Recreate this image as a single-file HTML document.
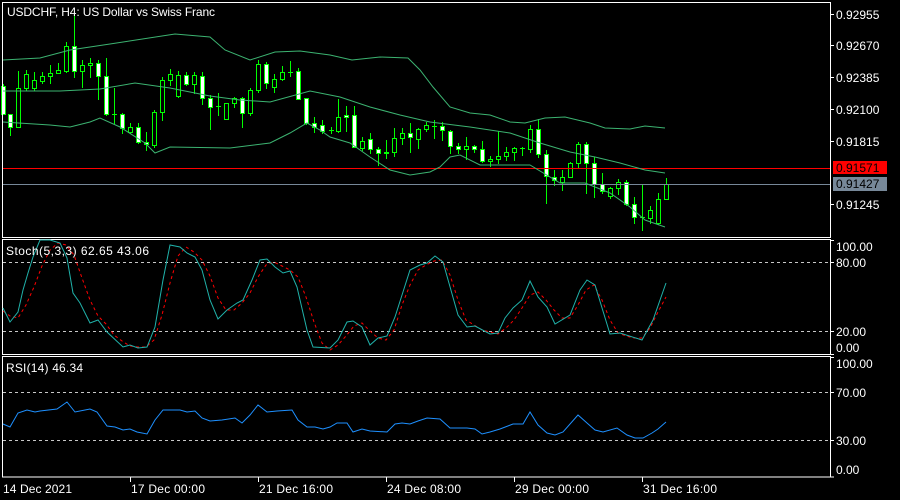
<!DOCTYPE html>
<html><head><meta charset="utf-8"><style>
html,body{margin:0;padding:0;background:#000;}
svg{display:block;}
text{font-family:"Liberation Sans",sans-serif;font-size:12px;fill:#fff;}
</style></head><body>
<svg id="s" width="900" height="500" viewBox="0 0 900 500" shape-rendering="crispEdges">
<rect width="900" height="500" fill="#000"/>
<g id="c"></g>
<!-- borders -->
<g fill="none" stroke="#fff" stroke-width="1">
<rect x="2.5" y="2.5" width="828" height="235"/>
<rect x="2.5" y="239.5" width="828" height="115"/>
<rect x="2.5" y="356.5" width="828" height="120.5"/>
</g>
<!-- levels -->
<g stroke="#c8c8c8" stroke-dasharray="3,3" stroke-width="1">
<line x1="3" y1="262.5" x2="830" y2="262.5"/>
<line x1="3" y1="331.5" x2="830" y2="331.5"/>
<line x1="3" y1="392.5" x2="830" y2="392.5"/>
<line x1="3" y1="440.5" x2="830" y2="440.5"/>
</g>
<line x1="3" y1="168.5" x2="830" y2="168.5" stroke="#ff0000"/>
<line x1="3" y1="184.5" x2="830" y2="184.5" stroke="#778899"/>
<!-- axis ticks -->
<g stroke="#fff">
<line x1="830" y1="14.5" x2="834" y2="14.5"/>
<line x1="830" y1="45.5" x2="834" y2="45.5"/>
<line x1="830" y1="77.5" x2="834" y2="77.5"/>
<line x1="830" y1="109.5" x2="834" y2="109.5"/>
<line x1="830" y1="141.5" x2="834" y2="141.5"/>
<line x1="830" y1="204.5" x2="834" y2="204.5"/>
<line x1="830" y1="240.5" x2="834" y2="240.5"/>
<line x1="830" y1="262.5" x2="834" y2="262.5"/>
<line x1="830" y1="331.5" x2="834" y2="331.5"/>
<line x1="830" y1="354.5" x2="834" y2="354.5"/>
<line x1="830" y1="357.5" x2="834" y2="357.5"/>
<line x1="830" y1="392.5" x2="834" y2="392.5"/>
<line x1="830" y1="440.5" x2="834" y2="440.5"/>
<line x1="830" y1="477" x2="834" y2="477"/>
<line x1="130.5" y1="477" x2="130.5" y2="482"/>
<line x1="258.5" y1="477" x2="258.5" y2="482"/>
<line x1="386.5" y1="477" x2="386.5" y2="482"/>
<line x1="514.5" y1="477" x2="514.5" y2="482"/>
<line x1="642.5" y1="477" x2="642.5" y2="482"/>
</g>
<g>
<text x="836" y="19">0.92955</text>
<text x="836" y="50">0.92670</text>
<text x="836" y="82">0.92385</text>
<text x="836" y="114">0.92100</text>
<text x="836" y="146">0.91815</text>
<text x="836" y="209">0.91245</text>
<rect x="833" y="161" width="54" height="13" fill="#ff0000"/>
<text x="836" y="172" style="fill:#000">0.91571</text>
<rect x="833" y="177" width="54" height="14" fill="#778899"/>
<text x="836" y="188" style="fill:#000">0.91427</text>
<text x="836" y="251">100.00</text>
<text x="836" y="267">80.00</text>
<text x="836" y="336">20.00</text>
<text x="836" y="352">0.00</text>
<text x="836" y="368">100.00</text>
<text x="836" y="397">70.00</text>
<text x="836" y="445">30.00</text>
<text x="836" y="474">0.00</text>
<text x="3" y="493" textLength="69">14 Dec 2021</text>
<text x="131" y="493" textLength="74">17 Dec 00:00</text>
<text x="259" y="493" textLength="74">21 Dec 16:00</text>
<text x="387" y="493" textLength="74">24 Dec 08:00</text>
<text x="515" y="493" textLength="74">29 Dec 00:00</text>
<text x="643" y="493" textLength="74">31 Dec 16:00</text>
</g>
<g id="ind"></g>
<text x="7" y="16" textLength="208">USDCHF, H4:  US Dollar vs Swiss Franc</text>
<text x="6" y="255" textLength="143">Stoch(5,3,3) 62.65 43.06</text>
<text x="6" y="372" textLength="77">RSI(14) 46.34</text>
</svg>
<script>
var NS="http://www.w3.org/2000/svg";
function el(p,t,a){var e=document.createElementNS(NS,t);for(var k in a)e.setAttribute(k,a[k]);p.appendChild(e);return e;}
var C=[
[3,'f',86,114,84,114],[10,'f',114,127,114,135],[18,'h',88,127,71,127],[26,'h',74,88,70,90],[34,'h',80,88,72,90],
[42,'h',76,81,72,83],[50,'h',73,76,65,83],[58,'h',70,73,63,73],[66,'h',46,71,42,72],[74,'f',46,71,15,77],
[82,'h',65,71,60,87],[90,'h',63,65,58,77],[98,'f',63,76,60,99],[106,'f',76,114,58,115],[114,'d',114,114,88,123],
[122,'f',114,128,113,133],[130,'h',127,132,123,133],[138,'f',127,142,123,143],[146,'f',142,144,132,150],[154,'h',112,145,110,147],
[162,'h',80,112,77,120],[170,'h',74,80,69,85],[178,'h',75,96,71,97],[186,'f',75,84,72,85],[194,'h',75,84,72,93],
[202,'f',76,98,72,104],[210,'f',98,107,95,129],[218,'d',106,106,93,115],[226,'h',103,119,103,119],[234,'h',98,103,97,107],
[242,'f',98,113,97,127],[250,'h',90,113,88,115],[258,'h',64,90,60,92],[266,'f',64,83,62,88],[274,'h',79,87,74,92],
[282,'h',72,79,66,80],[290,'d',72,72,61,76],[298,'f',71,99,68,99],[306,'f',98,123,98,124],[314,'f',123,127,117,132],
[322,'f',125,131,120,133],[331,'d',130,130,127,133],[338,'h',117,131,99,132],[346,'f',115,117,106,131],[354,'f',115,147,106,147],
[362,'h',141,148,137,150],[370,'f',139,149,133,153],[378,'f',149,153,147,165],[386,'h',152,153,140,158],[394,'h',138,152,128,156],
[402,'h',133,138,128,144],[410,'f',133,137,123,152],[418,'h',129,139,128,148],[426,'h',125,129,122,131],[434,'d',126,126,120,138],
[442,'f',126,130,122,140],[450,'f',131,146,130,153],[458,'f',146,149,143,153],[466,'h',146,149,137,159],[474,'f',146,149,145,152],
[482,'f',149,161,141,162],[490,'h',159,161,156,166],[498,'h',156,159,131,163],[506,'h',152,156,147,160],[514,'h',148,152,147,160],
[522,'d',148,148,147,155],[530,'h',129,149,125,152],[538,'f',129,154,119,157],[546,'f',154,176,150,203],[554,'f',177,180,170,185],
[562,'h',177,182,170,190],[570,'h',163,177,162,177],[578,'h',144,163,142,167],[586,'f',144,163,142,193],[594,'f',163,184,157,197],
[602,'f',184,191,173,193],[610,'h',188,196,187,198],[618,'h',182,188,179,194],[626,'f',182,204,180,205],[634,'f',204,217,197,223],
[642,'d',217,217,185,230],[650,'h',210,218,206,223],[658,'h',199,223,193,224],[666,'h',184,199,178,199]
];
var g=document.getElementById('c'),ind=document.getElementById('ind');
function pl(pts,col,dash){var a={points:pts.map(function(p){return p[0]+','+p[1];}).join(' '),fill:'none',stroke:col,'stroke-width':1,'shape-rendering':'auto'};if(dash)a['stroke-dasharray']=dash;el(ind,'polyline',a);}
// bollinger
pl([[3,60],[40,58],[70,50],[110,44],[175,34],[210,37],[225,50],[250,60],[275,52],[300,51],[330,55],[352,60],[380,57],[408,58],[420,70],[433,87],[450,107],[470,113],[490,115],[510,122],[525,123],[545,118],[565,117],[590,123],[605,128],[630,129],[645,126],[665,128]],'#3cb371');
pl([[3,91],[60,91],[100,89],[135,83],[170,88],[210,96],[240,100],[270,102],[310,91],[340,97],[370,107],[400,115],[430,122],[470,127],[510,133],[540,143],[570,152],[595,157],[620,163],[645,170],[665,173]],'#3cb371');
pl([[3,122],[50,125],[70,127],[90,122],[100,118],[120,127],[145,143],[155,153],[170,147],[230,148],[270,143],[290,133],[307,123],[320,130],[330,137],[350,143],[370,157],[390,170],[410,175],[430,172],[440,167],[450,157],[460,155],[480,165],[530,165],[560,183],[585,183],[610,193],[630,207],[645,220],[665,227]],'#3cb371');
C.forEach(function(c){var x=c[0],t=c[1],bt=c[2],bb=c[3],hi=c[4],lo=c[5];
el(g,'rect',{x:x,y:hi,width:1,height:Math.max(1,lo-hi+1),fill:'#00ff00'});
if(t=='d'){el(g,'rect',{x:x-2,y:bt,width:5,height:1,fill:'#00ff00'});return;}
el(g,'rect',{x:x-2,y:bt,width:5,height:bb-bt+1,fill:'#00ff00'});
if(bb-bt>=2)el(g,'rect',{x:x-1,y:bt+1,width:3,height:bb-bt-1,fill:t=='f'?'#ffffff':'#000000'});
});
var st=[[3,308],[10,322],[18,312],[23,290],[28,273],[33,257],[40,240],[50,240],[60,243],[67,258],[73,293],[80,303],[90,323],[98,320],[107,332],[123,347],[130,345],[138,348],[147,347],[155,327],[163,280],[170,245],[180,247],[187,253],[195,257],[202,270],[210,300],[218,319],[227,310],[237,303],[243,300],[252,280],[260,260],[267,259],[275,267],[283,273],[290,271],[297,287],[307,330],[313,347],[330,348],[338,340],[347,322],[353,321],[362,327],[370,345],[378,338],[387,336],[395,317],[410,270],[420,265],[427,263],[435,256],[443,262],[458,315],[467,327],[475,326],[490,334],[498,333],[505,318],[513,308],[522,300],[530,281],[538,297],[547,307],[555,324],[570,315],[580,290],[587,280],[595,285],[610,334],[620,333],[642,340],[653,320],[666,283]];
var sg=[[3,311],[10,316],[18,318],[26,305],[34,287],[42,266],[50,250],[58,243],[66,245],[74,255],[82,278],[90,300],[98,316],[106,324],[114,335],[122,341],[130,346],[138,347],[146,347],[154,340],[162,315],[170,283],[178,256],[186,247],[194,252],[202,260],[210,276],[218,298],[226,310],[234,310],[242,303],[250,293],[258,277],[266,265],[274,262],[282,266],[290,270],[298,277],[306,297],[314,322],[322,343],[330,350],[338,345],[346,336],[354,326],[362,323],[370,331],[378,338],[386,340],[394,330],[402,305],[410,285],[418,270],[426,265],[434,261],[442,260],[450,275],[458,300],[466,320],[474,325],[482,330],[490,332],[498,334],[506,328],[514,320],[522,308],[530,295],[538,292],[546,300],[554,310],[562,318],[570,318],[578,305],[586,290],[594,285],[602,300],[610,320],[618,333],[626,336],[634,338],[642,338],[650,328],[658,312],[666,297]];
pl(sg,'#ff0000','3,3');
pl(st,'#20b2aa');
pl([[3,424],[10,427],[18,413],[27,410],[35,412],[40,411],[57,409],[67,402],[75,412],[90,409],[97,412],[107,426],[115,427],[123,430],[130,429],[137,432],[147,434],[155,420],[163,410],[180,410],[187,412],[195,411],[202,418],[210,421],[222,420],[235,418],[242,423],[250,415],[258,405],[267,412],[277,411],[292,410],[298,420],[307,427],[315,427],[323,429],[330,427],[337,423],[347,423],[353,432],[362,429],[370,431],[387,432],[395,424],[402,423],[410,424],[418,421],[427,418],[440,419],[450,428],[467,428],[475,429],[482,434],[490,432],[500,429],[513,424],[523,424],[530,412],[538,425],[547,433],[555,435],[563,432],[578,415],[587,423],[595,430],[603,432],[617,428],[627,435],[635,438],[643,438],[652,433],[658,429],[666,422]],'#1e90ff');
</script>
</body></html>
